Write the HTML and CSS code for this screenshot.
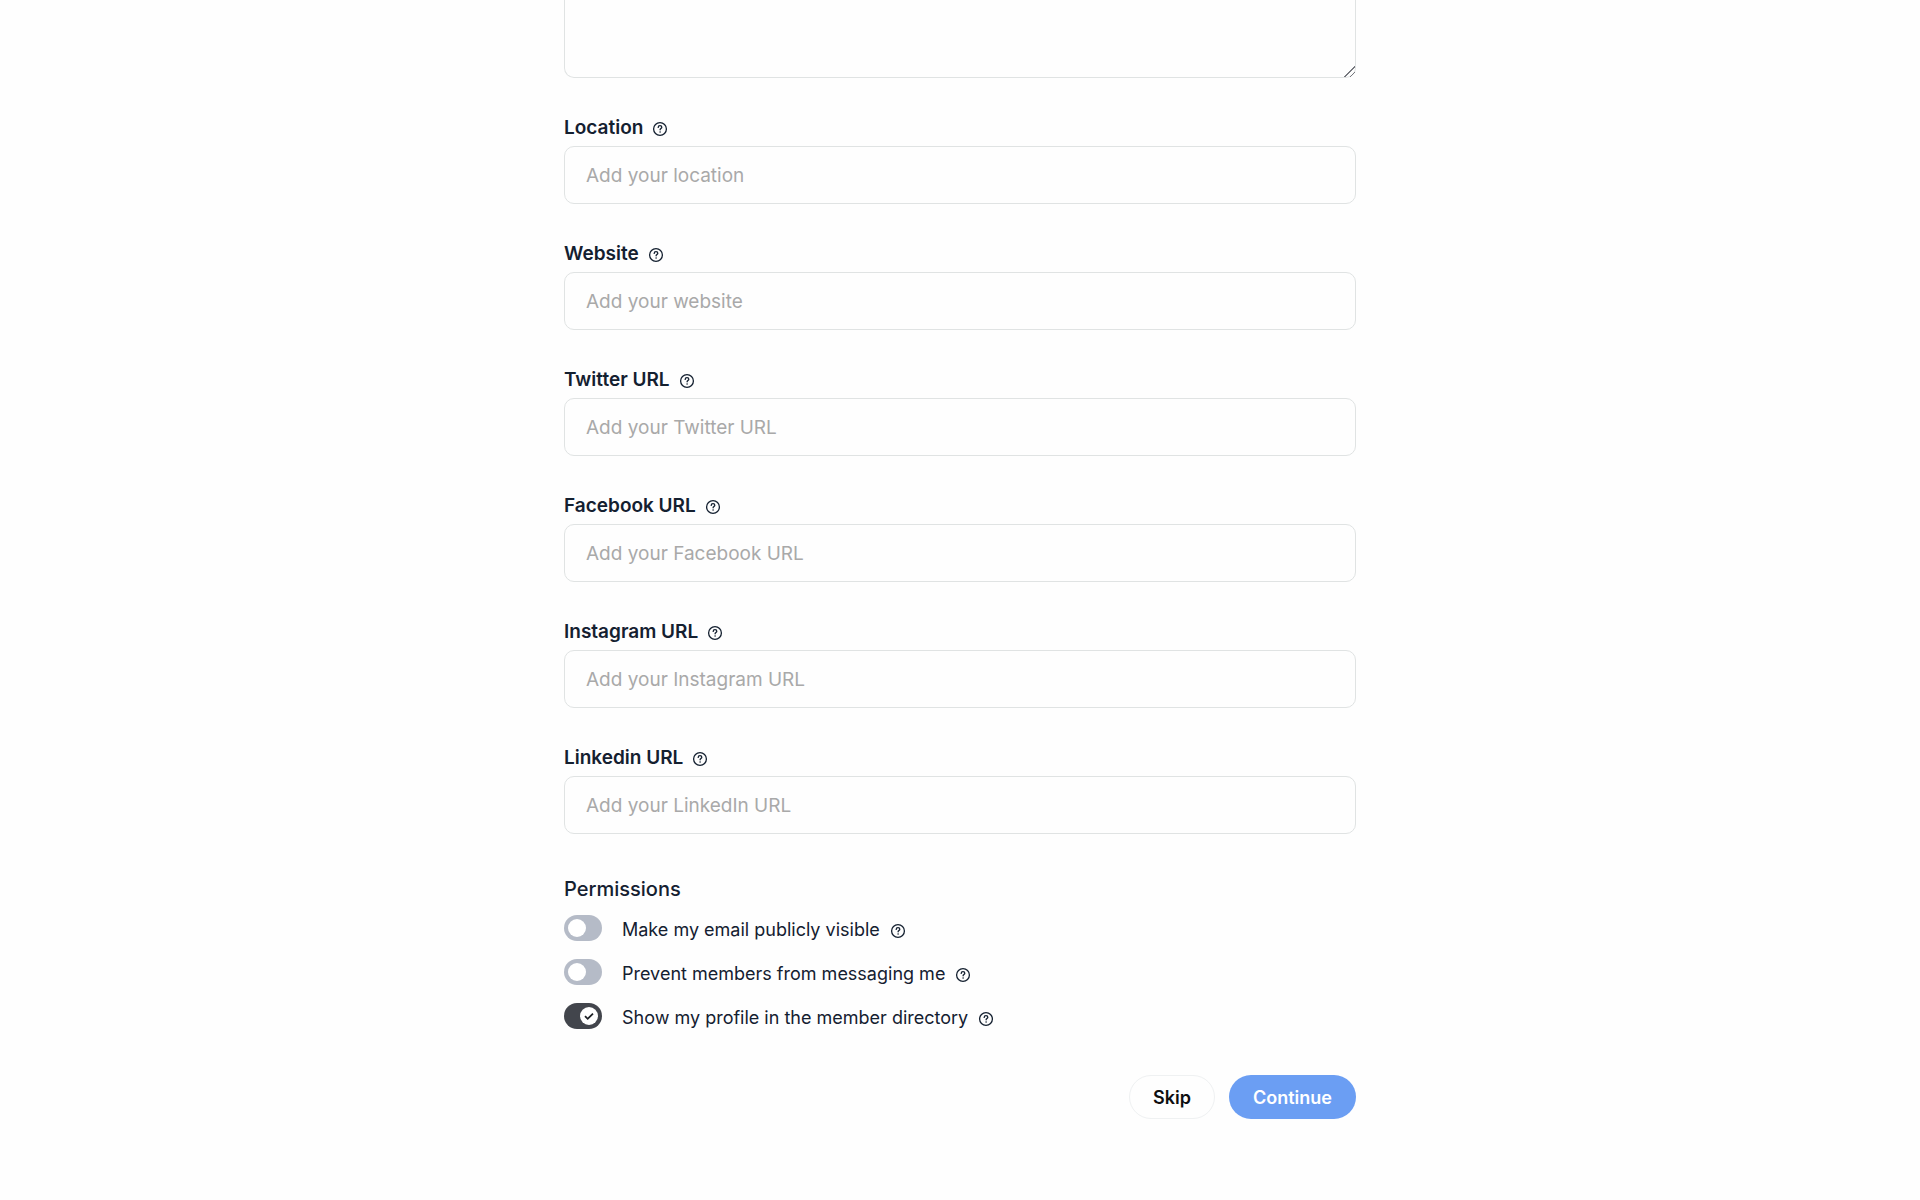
FILE: index.html
```html
<!DOCTYPE html>
<html lang="en">
<head>
    <meta charset="UTF-8">
    <meta name="viewport" content="width=device-width, initial-scale=1">
    <title>Complete your profile</title>
    <link rel="stylesheet" href="styles.css">
</head>
<body>
    <svg class="sprite" aria-hidden="true">
        <symbol id="help" viewBox="0 0 16 16">
            <circle cx="8" cy="8" r="6.4" fill="none" stroke="currentColor" stroke-width="1.3"/>
            <path d="M6.2 6.4C6.2 5.3 7 4.7 8 4.7s1.8.7 1.8 1.6c0 1.2-1.7 1.3-1.7 2.5" fill="none" stroke="currentColor" stroke-width="1.3" stroke-linecap="round"/>
            <circle cx="8.1" cy="11" r=".8" fill="currentColor"/>
        </symbol>
    </svg>

    <form class="profile-form">
        <textarea class="bio" aria-label="Bio"></textarea>

        <div class="field">
            <div class="field-label">
                <label for="location">Location</label>
                <button type="button" class="help" aria-label="Help"><svg><use href="#help"/></svg></button>
            </div>
            <input type="text" id="location" placeholder="Add your location">
        </div>
        <div class="field">
            <div class="field-label">
                <label for="website">Website</label>
                <button type="button" class="help" aria-label="Help"><svg><use href="#help"/></svg></button>
            </div>
            <input type="text" id="website" placeholder="Add your website">
        </div>
        <div class="field">
            <div class="field-label">
                <label for="twitter">Twitter URL</label>
                <button type="button" class="help" aria-label="Help"><svg><use href="#help"/></svg></button>
            </div>
            <input type="text" id="twitter" placeholder="Add your Twitter URL">
        </div>
        <div class="field">
            <div class="field-label">
                <label for="facebook">Facebook URL</label>
                <button type="button" class="help" aria-label="Help"><svg><use href="#help"/></svg></button>
            </div>
            <input type="text" id="facebook" placeholder="Add your Facebook URL">
        </div>
        <div class="field">
            <div class="field-label">
                <label for="instagram">Instagram URL</label>
                <button type="button" class="help" aria-label="Help"><svg><use href="#help"/></svg></button>
            </div>
            <input type="text" id="instagram" placeholder="Add your Instagram URL">
        </div>
        <div class="field">
            <div class="field-label">
                <label for="linkedin">Linkedin URL</label>
                <button type="button" class="help" aria-label="Help"><svg><use href="#help"/></svg></button>
            </div>
            <input type="text" id="linkedin" placeholder="Add your LinkedIn URL">
        </div>

        <section class="permissions">
            <h2>Permissions</h2>
            <div class="permission">
                <span class="toggle">
                    <input type="checkbox" id="email-visible">
                    <svg class="knob" viewBox="0 0 18 18"><circle cx="9" cy="9" r="9"/><path d="M5 9.2l2.7 2.6L13 6.6"/></svg>
                </span>
                <label for="email-visible">Make my email publicly visible</label>
                <button type="button" class="help" aria-label="Help"><svg><use href="#help"/></svg></button>
            </div>
            <div class="permission">
                <span class="toggle">
                    <input type="checkbox" id="prevent-messages">
                    <svg class="knob" viewBox="0 0 18 18"><circle cx="9" cy="9" r="9"/><path d="M5 9.2l2.7 2.6L13 6.6"/></svg>
                </span>
                <label for="prevent-messages">Prevent members from messaging me</label>
                <button type="button" class="help" aria-label="Help"><svg><use href="#help"/></svg></button>
            </div>
            <div class="permission">
                <span class="toggle">
                    <input type="checkbox" id="show-profile" checked>
                    <svg class="knob" viewBox="0 0 18 18"><circle cx="9" cy="9" r="9"/><path d="M5 9.2l2.7 2.6L13 6.6"/></svg>
                </span>
                <label for="show-profile">Show my profile in the member directory</label>
                <button type="button" class="help" aria-label="Help"><svg><use href="#help"/></svg></button>
            </div>
        </section>

        <div class="actions">
            <button type="button" class="btn btn-skip">Skip</button>
            <button type="submit" class="btn btn-continue">Continue</button>
        </div>
    </form>
</body>
</html>
```
FILE: styles.css
```css
* {
    box-sizing: border-box;
}
body {
    margin: 0;
    background: #fefefe;
    color: #142030;
    font-family: Inter, "Liberation Sans", sans-serif;
    font-size: 19px;
    line-height: 30px;
}
.sprite {
    display: none;
}
.profile-form {
    max-width: 792px;
    margin: 0 auto;
    padding-bottom: 80px;
}
.bio,
.field input {
    display: block;
    width: 100%;
    background: #fefefe;
    border: 1px solid #e0e3e3;
    border-radius: 10px;
    padding: 0 21px;
    color: inherit;
    font-family: inherit;
    font-size: 19px;
}
.bio {
    height: 78px;
    border-top: 0;
    border-radius: 0 0 10px 10px;
    resize: vertical;
}
.bio::-webkit-resizer {
    background: linear-gradient(315deg, transparent 3px, #77797f 3px, #77797f 4px, transparent 4px, transparent 7px, #77797f 7px, #77797f 8px, transparent 8px);
}
.field {
    padding-top: 36px;
}
.field input {
    height: 58px;
}
.field input::placeholder {
    color: #a9a9a9;
    opacity: 1;
}
.field-label {
    display: flex;
    align-items: center;
    gap: 9px;
    height: 28px;
    margin-bottom: 4px;
    font-weight: 600;
}
.help {
    display: flex;
    padding: 2px 0 0;
    border: 0;
    background: none;
    color: #142030;
    cursor: pointer;
}
.help svg {
    width: 16px;
    height: 16px;
}
.permissions h2 {
    margin: 40px 0 11px;
    font-size: 20px;
    font-weight: 500;
    line-height: 30px;
}
.permission {
    display: flex;
    align-items: center;
    gap: 10px;
    margin-bottom: 14px;
    font-size: 18px;
}
.toggle {
    position: relative;
    align-self: flex-start;
    width: 38px;
    height: 26px;
    margin-right: 10px;
}
.toggle input {
    appearance: none;
    display: block;
    width: 100%;
    height: 100%;
    margin: 0;
    border-radius: 13px;
    background: #b5bbc7;
    cursor: pointer;
}
.toggle input:checked {
    background: #42454c;
}
.knob {
    position: absolute;
    top: 4px;
    left: 4px;
    width: 18px;
    height: 18px;
    pointer-events: none;
}
.knob circle {
    fill: #fff;
}
.knob path {
    display: none;
    fill: none;
    stroke: #1d2025;
    stroke-width: 1.8;
}
.toggle input:checked + .knob {
    left: 16px;
}
.toggle input:checked + .knob path {
    display: block;
}
.actions {
    display: flex;
    justify-content: flex-end;
    gap: 14px;
    margin-top: 42px;
}
.btn {
    height: 44px;
    padding: 0 23px;
    border: 1px solid transparent;
    border-radius: 22px;
    font-family: inherit;
    font-size: 18px;
    font-weight: 600;
    cursor: pointer;
}
.btn-skip {
    background: #fefefe;
    border-color: #eff1f2;
    color: #0e0f11;
}
.btn-continue {
    background: #6b9ef3;
    color: #fff;
}
```
